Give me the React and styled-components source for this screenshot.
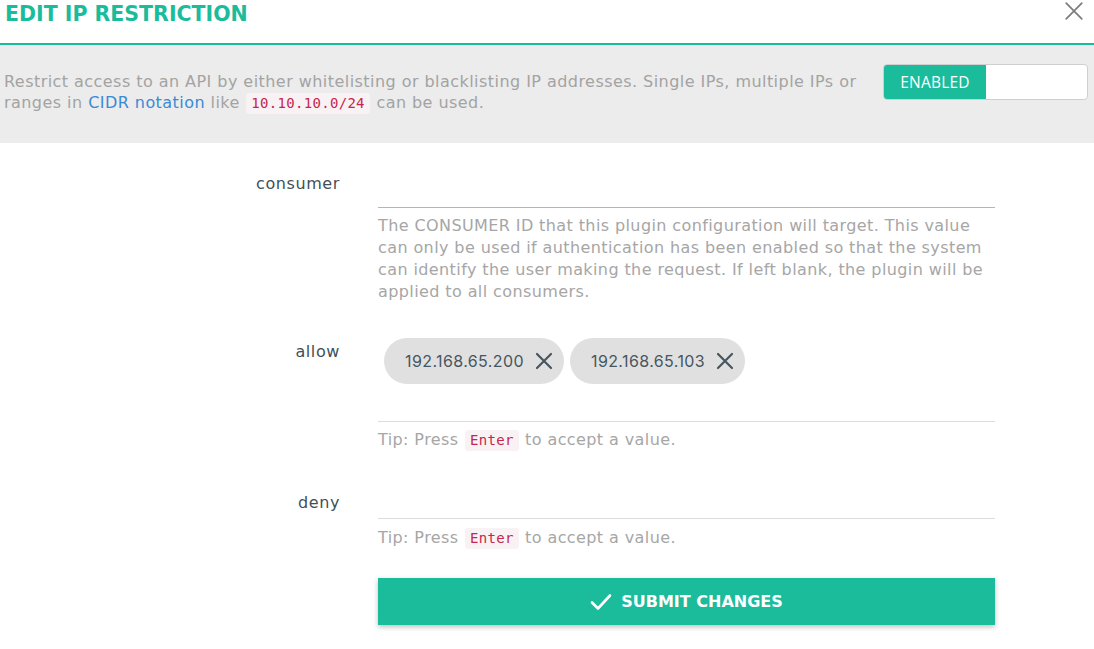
import styled, { createGlobalStyle } from "styled-components";

const GlobalStyle = createGlobalStyle`
  html, body {
    margin: 0;
    padding: 0;
    background: #ffffff;
    font-family: "DejaVu Sans", Verdana, sans-serif;
  }
`;

const GREEN = "#1abc9c";

const Modal = styled.div`
  width: 1094px;
  height: 649px;
  background: #fff;
  overflow: hidden;
`;

const Header = styled.div`
  height: 43px;
  border-bottom: 2px solid ${GREEN};
  display: flex;
  justify-content: space-between;
  align-items: flex-start;
  padding: 0 10px 0 5px;
`;

const Title = styled.h2`
  margin: 1px 0 0;
  font-size: 20.5px;
  line-height: 26px;
  font-weight: 700;
  color: ${GREEN};
`;

const Close = styled.button`
  border: 0;
  background: none;
  padding: 0;
  margin-top: 1px;
  width: 20px;
  height: 20px;
  cursor: pointer;
`;

const Intro = styled.div`
  height: 98px;
  background: #ececec;
  display: flex;
  align-items: flex-start;
  justify-content: space-between;
  padding: 19px 6px 0 4px;
  box-sizing: border-box;
`;

const IntroText = styled.p`
  margin: 7px 0 0;
  width: 866px;
  font-size: 16px;
  line-height: 21px;
  letter-spacing: 0.45px;
  color: #a3a3a3;

  a {
    color: #3a8ad4;
    text-decoration: none;
  }
`;

const Code = styled.code`
  display: inline-block;
  font-family: "DejaVu Sans Mono", "Liberation Mono", monospace;
  font-size: 14px;
  line-height: 21px;
  letter-spacing: 0.3px;
  color: #c7254e;
  background: #f9f2f4;
  border-radius: 3px;
  padding: 0 5px;
  margin: 0 1px;
`;

const Toggle = styled.div`
  width: 205px;
  height: 36px;
  border: 1px solid #cfcfcf;
  border-radius: 4px;
  background: #fff;
  box-sizing: border-box;
  display: flex;
  overflow: hidden;
`;

const ToggleOn = styled.span`
  width: 102px;
  background: ${GREEN};
  color: #fff;
  font-family: "Open Sans", sans-serif;
  font-size: 15.5px;
  letter-spacing: 0.2px;
  display: flex;
  align-items: center;
  justify-content: center;
`;

const Form = styled.form`
  display: grid;
  grid-template-columns: 340px 617px;
  column-gap: 38px;
  padding-top: 17px;
`;

const Label = styled.label`
  text-align: right;
  font-size: 16px;
  line-height: 48px;
  letter-spacing: 0.6px;
  color: #3f5059;
  margin-top: ${({ $top }) => $top || 0}px;
`;

const Field = styled.div`
  margin-top: ${({ $top }) => $top || 0}px;
`;

const Input = styled.div`
  height: ${({ $h }) => $h}px;
  border-bottom: 1px solid ${({ $dark }) => ($dark ? "#b5b5b5" : "#dcdcdc")};
  box-sizing: border-box;
`;

const TagBox = styled.div`
  height: 94px;
  padding: 10px 6px 0;
  box-sizing: border-box;
  border-bottom: 1px solid #dcdcdc;
  display: flex;
  gap: 6px;
  align-items: flex-start;
`;

const Chip = styled.span`
  height: 46px;
  border-radius: 23px;
  background: #e0e0e0;
  color: #46565f;
  font-family: Inter, sans-serif;
  font-size: 16px;
  letter-spacing: 0.4px;
  display: inline-flex;
  align-items: center;
  gap: 11px;
  padding: 0 11px 0 21px;
`;

const Help = styled.p`
  margin: ${({ $top }) => $top || 7}px 0 0;
  font-size: 16px;
  line-height: 22px;
  letter-spacing: 0.4px;
  color: #a6a6a6;
`;

const Submit = styled.button`
  grid-column: 2;
  margin-top: 29px;
  height: 47px;
  border: 0;
  background: ${GREEN};
  color: #fff;
  font-family: inherit;
  font-size: 16px;
  font-weight: 700;
  display: flex;
  align-items: center;
  justify-content: center;
  gap: 9px;
  box-shadow: 0 2px 5px rgba(0, 0, 0, 0.25);
  cursor: pointer;
`;

const XIcon = ({ size = 18, color = "#46565f", width = 2.2 }) => (
  <svg width={size} height={size} viewBox="0 0 18 18">
    <path d="M2 2L16 16M16 2L2 16" stroke={color} strokeWidth={width} strokeLinecap="round" />
  </svg>
);

const Tip = ({ top }) => (
  <Help $top={top}>
    Tip: Press <Code>Enter</Code> to accept a value.
  </Help>
);

export default function App() {
  return (
    <Modal>
      <GlobalStyle />
      <Header>
        <Title>EDIT IP RESTRICTION</Title>
        <Close aria-label="close">
          <XIcon size={20} color="#7d7d7d" width={1.6} />
        </Close>
      </Header>
      <Intro>
        <IntroText>
          Restrict access to an API by either whitelisting or blacklisting IP addresses. Single IPs,
          multiple IPs or ranges in <a href="#cidr">CIDR notation</a> like <Code>10.10.10.0/24</Code> can be
          used.
        </IntroText>
        <Toggle>
          <ToggleOn>ENABLED</ToggleOn>
        </Toggle>
      </Intro>
      <Form>
        <Label>consumer</Label>
        <Field>
          <Input $h={48} $dark />
          <Help>
            The CONSUMER ID that this plugin configuration will target. This value can only be used if
            authentication has been enabled so that the system can identify the user making the request.
            If left blank, the plugin will be applied to all consumers.
          </Help>
        </Field>

        <Label $top={25}>allow</Label>
        <Field $top={25}>
          <TagBox>
            <Chip>
              192.168.65.200 <XIcon />
            </Chip>
            <Chip>
              192.168.65.103 <XIcon />
            </Chip>
          </TagBox>
          <Tip />
        </Field>

        <Label $top={28}>deny</Label>
        <Field $top={28}>
          <Input $h={40} />
          <Tip top={8} />
        </Field>

        <Submit type="button">
          <svg width="22" height="18" viewBox="0 0 22 18">
            <path d="M2 9.5L8 15.5L20 2.5" fill="none" stroke="#fff" strokeWidth="2.6" strokeLinecap="round" strokeLinejoin="round" />
          </svg>
          SUBMIT CHANGES
        </Submit>
      </Form>
    </Modal>
  );
}
